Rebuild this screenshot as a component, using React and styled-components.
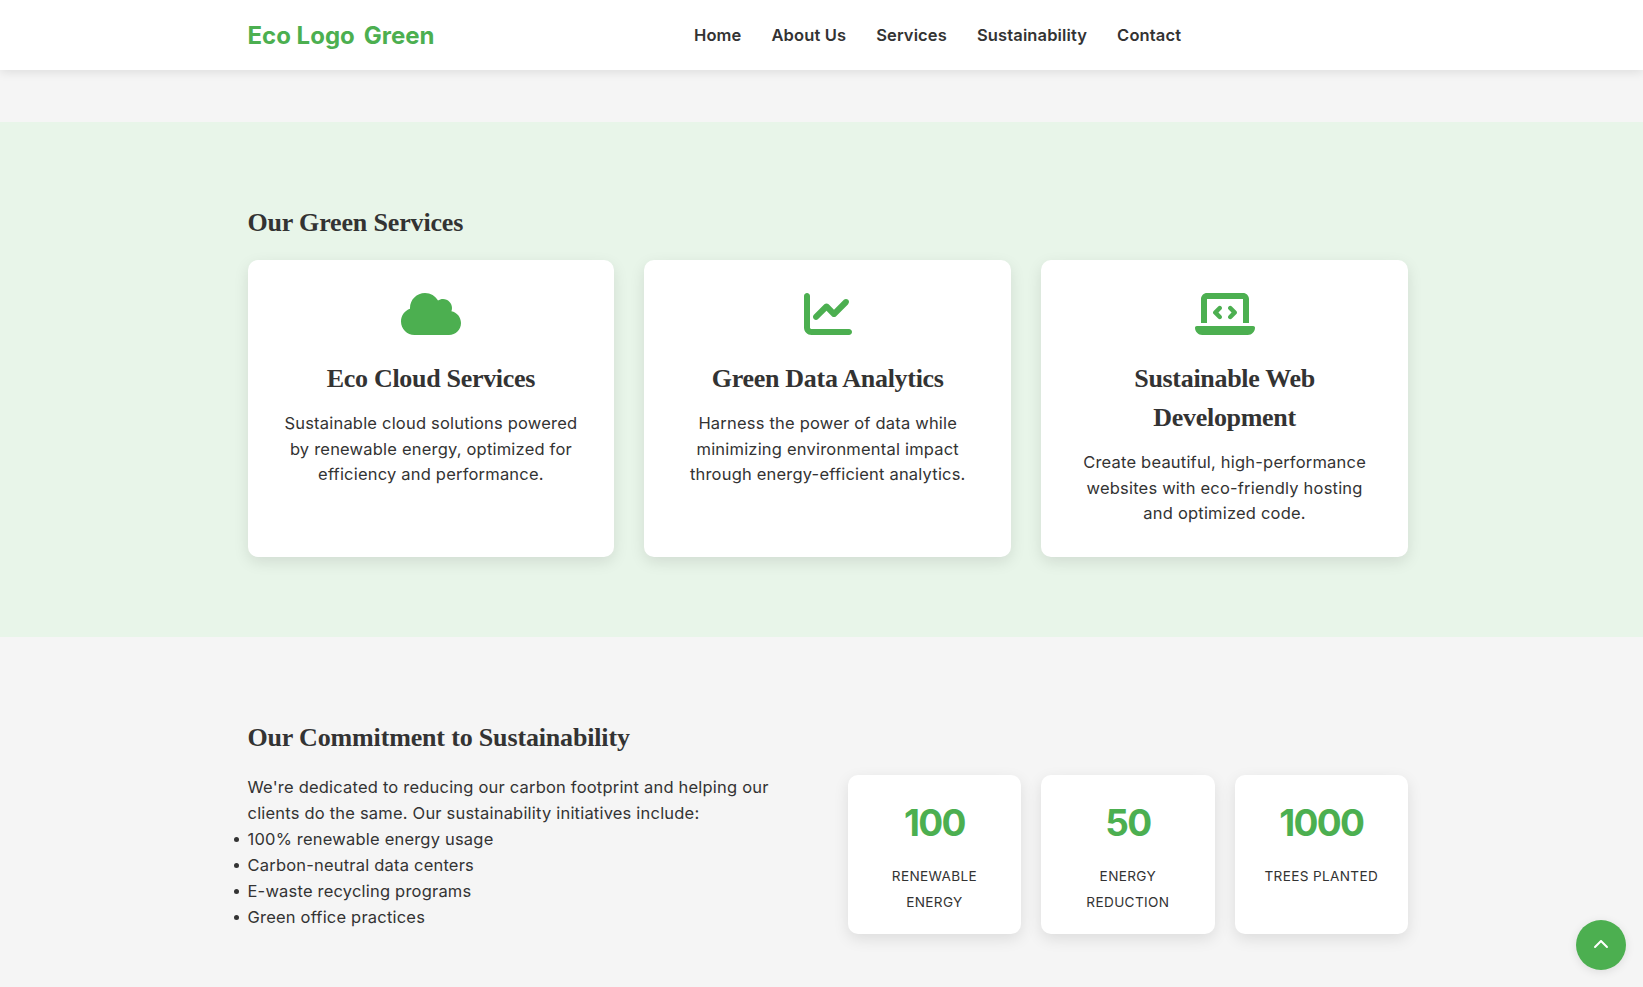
import styled, { createGlobalStyle } from "styled-components";
import { FaCloud, FaChartLine, FaLaptopCode, FaChevronUp } from "react-icons/fa6";

const GlobalStyle = createGlobalStyle`
  * {
    box-sizing: border-box;
  }
  body {
    margin: 0;
    background: #f5f5f5;
    color: #333;
    font-family: "Inter", "Liberation Sans", sans-serif;
    font-size: 16.5px;
    letter-spacing: 0.2px;
    line-height: 25.6px;
  }
`;

const Header = styled.header`
  height: 70px;
  background: #fff;
  box-shadow: 0 2px 10px rgba(0, 0, 0, 0.1);
`;

const HeaderInner = styled.div`
  display: flex;
  align-items: center;
  height: 100%;
  margin-left: 247.5px;
  padding-top: 2px;
`;

const Logo = styled.div`
  display: flex;
  gap: 9px;
  width: 191px;
  color: #4caf50;
  font-size: 24px;
  font-weight: 700;
  letter-spacing: 0;
`;

const Nav = styled.nav`
  display: flex;
  gap: 30px;
  margin-left: 255.5px;
`;

const NavLink = styled.a`
  color: #333;
  font-weight: 600;
  letter-spacing: 0.13px;
  text-decoration: none;
`;

const Section = styled.section`
  margin-top: ${(p) => p.$top || 0}px;
  padding: 80px 0;
  background: ${(p) => p.$bg || "transparent"};
`;

const Container = styled.div`
  width: 1160.5px;
  margin-left: 247.5px;
`;

const Heading = styled.h2`
  margin: 0 0 17px;
  font-family: "Liberation Serif", serif;
  font-size: 26px;
  font-weight: 700;
  letter-spacing: -0.16px;
  line-height: 41px;
`;

const ServiceGrid = styled.div`
  display: grid;
  grid-template-columns: repeat(3, 1fr);
  gap: 30px;
`;

const ServiceCard = styled.div`
  padding: 30px;
  background: #fff;
  border-radius: 10px;
  box-shadow: 0 5px 15px rgba(0, 0, 0, 0.1);
  text-align: center;
`;

const IconWrap = styled.div`
  display: flex;
  justify-content: center;
  height: 48px;
  margin-bottom: 21px;
  color: #4caf50;

  svg {
    width: ${(p) => p.$width}px;
    height: 48px;
  }
`;

const ServiceTitle = styled.h3`
  margin: 0 0 13px;
  font-family: "Liberation Serif", serif;
  font-size: 26px;
  font-weight: 700;
  letter-spacing: -0.3px;
  line-height: 39px;
`;

const Text = styled.p`
  margin: 0;
`;

const Columns = styled.div`
  display: grid;
  grid-template-columns: 1fr 1fr;
  gap: 40px;
`;

const Intro = styled.div`
  margin-top: -1px;
  line-height: 26px;
`;

const List = styled.ul`
  margin: 0;
  padding: 0;
  list-style: none;
`;

const ListItem = styled.li`
  position: relative;

  &::before {
    content: "";
    position: absolute;
    top: 11px;
    left: -13.7px;
    width: 5.4px;
    height: 5.4px;
    background: #333;
    border-radius: 50%;
  }
`;

const Stats = styled.div`
  display: grid;
  grid-template-columns: repeat(3, 1fr);
  gap: 20px;
`;

const StatCard = styled.div`
  padding: 20px 20px 19px;
  background: #fff;
  border-radius: 10px;
  box-shadow: 0 5px 15px rgba(0, 0, 0, 0.1);
  text-align: center;
`;

const StatNumber = styled.div`
  margin-bottom: 12px;
  color: #4caf50;
  font-size: 37px;
  font-weight: 700;
  letter-spacing: -1.7px;
  line-height: 56px;
`;

const StatLabel = styled.div`
  font-size: 13.6px;
  letter-spacing: 0.35px;
  line-height: 26px;
  text-transform: uppercase;
`;

const BackToTop = styled.a`
  position: fixed;
  right: 17px;
  bottom: 17px;
  display: flex;
  align-items: center;
  justify-content: center;
  width: 50px;
  height: 50px;
  background: #4caf50;
  border-radius: 50%;
  box-shadow: 0 2px 10px rgba(0, 0, 0, 0.1);
  color: #fff;
  font-size: 16px;
`;

const services = [
  {
    icon: <FaCloud />,
    iconWidth: 60,
    title: "Eco Cloud Services",
    text: "Sustainable cloud solutions powered by renewable energy, optimized for efficiency and performance.",
  },
  {
    icon: <FaChartLine />,
    iconWidth: 48,
    title: "Green Data Analytics",
    text: "Harness the power of data while minimizing environmental impact through energy-efficient analytics.",
  },
  {
    icon: <FaLaptopCode />,
    iconWidth: 60,
    title: "Sustainable Web Development",
    text: "Create beautiful, high-performance websites with eco-friendly hosting and optimized code.",
  },
];

const stats = [
  { number: "100", label: "Renewable Energy" },
  { number: "50", label: "Energy Reduction" },
  { number: "1000", label: "Trees Planted" },
];

export default function App() {
  return (
    <>
      <GlobalStyle />
      <Header>
        <HeaderInner>
          <Logo>
            <span>Eco Logo</span>
            <span>Green</span>
          </Logo>
          <Nav>
            <NavLink href="#">Home</NavLink>
            <NavLink href="#">About Us</NavLink>
            <NavLink href="#">Services</NavLink>
            <NavLink href="#">Sustainability</NavLink>
            <NavLink href="#">Contact</NavLink>
          </Nav>
        </HeaderInner>
      </Header>

      <Section $top={52} $bg="#e8f5e9">
        <Container>
          <Heading>Our Green Services</Heading>
          <ServiceGrid>
            {services.map((s) => (
              <ServiceCard key={s.title}>
                <IconWrap $width={s.iconWidth}>{s.icon}</IconWrap>
                <ServiceTitle>{s.title}</ServiceTitle>
                <Text>{s.text}</Text>
              </ServiceCard>
            ))}
          </ServiceGrid>
        </Container>
      </Section>

      <Section>
        <Container>
          <Heading>Our Commitment to Sustainability</Heading>
          <Columns>
            <Intro>
              <Text>
                We're dedicated to reducing our carbon footprint and helping our
                clients do the same. Our sustainability initiatives include:
              </Text>
              <List>
                <ListItem>100% renewable energy usage</ListItem>
                <ListItem>Carbon-neutral data centers</ListItem>
                <ListItem>E-waste recycling programs</ListItem>
                <ListItem>Green office practices</ListItem>
              </List>
            </Intro>
            <Stats>
              {stats.map((s) => (
                <StatCard key={s.label}>
                  <StatNumber>{s.number}</StatNumber>
                  <StatLabel>{s.label}</StatLabel>
                </StatCard>
              ))}
            </Stats>
          </Columns>
        </Container>
      </Section>

      <BackToTop href="#">
        <FaChevronUp />
      </BackToTop>
    </>
  );
}
